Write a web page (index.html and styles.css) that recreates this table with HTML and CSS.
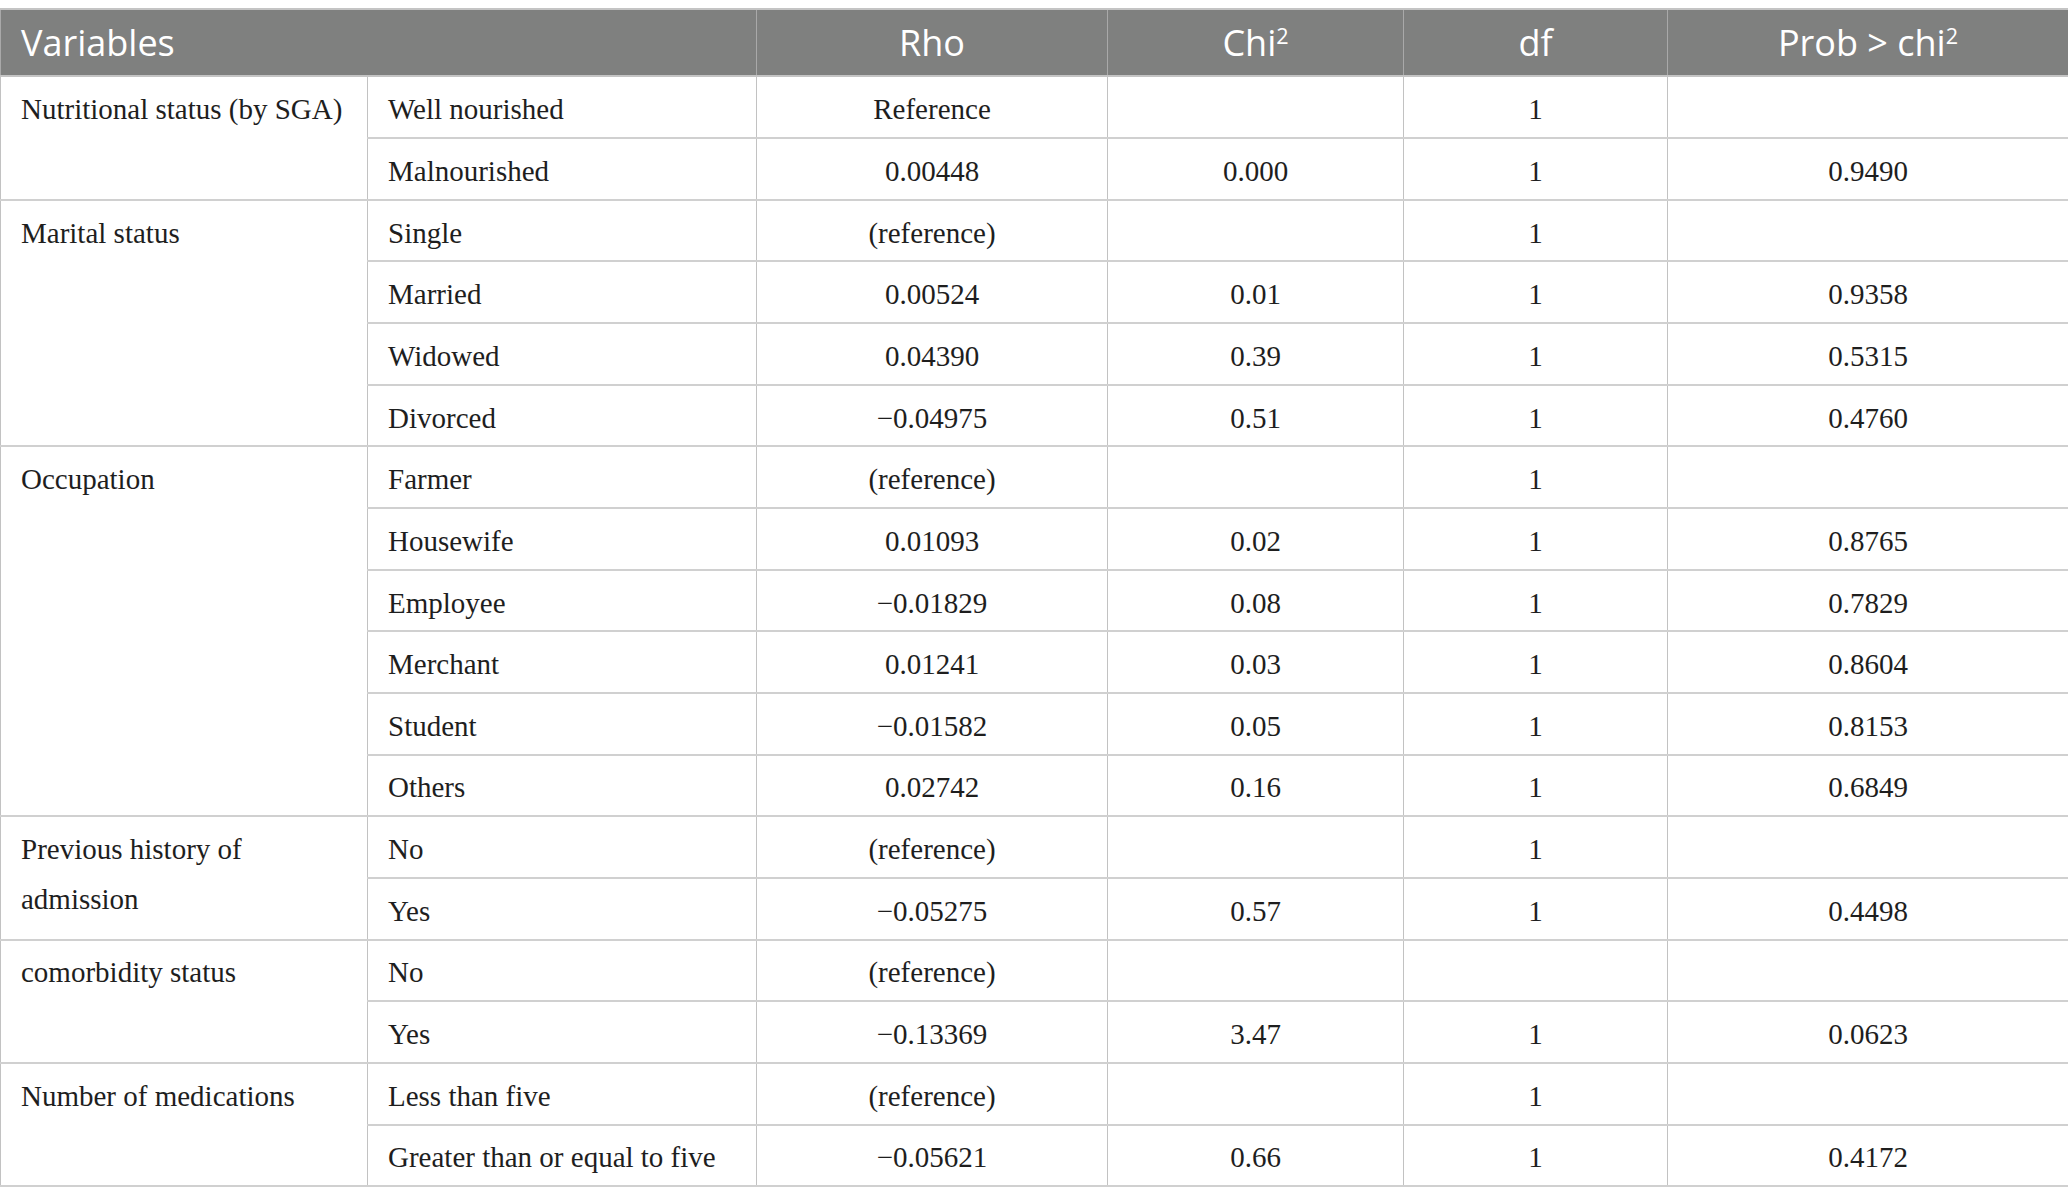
FILE: index.html
```html
<!DOCTYPE html>
<html lang="en">
<head>
<meta charset="utf-8">
<title>Table</title>
<link rel="stylesheet" href="styles.css">
</head>
<body>
<table class="stats">
  <colgroup>
    <col class="c1"><col class="c2"><col class="c3"><col class="c4"><col class="c5"><col class="c6">
  </colgroup>
  <thead>
    <tr>
      <th colspan="2" class="left">Variables</th>
      <th>Rho</th>
      <th>Chi<sup>2</sup></th>
      <th>df</th>
      <th>Prob &gt; chi<sup>2</sup></th>
    </tr>
  </thead>
  <tbody>
    <tr><td rowspan="2" class="left">Nutritional status (by SGA)</td><td class="left">Well nourished</td><td>Reference</td><td></td><td>1</td><td></td></tr>
    <tr><td class="left">Malnourished</td><td>0.00448</td><td>0.000</td><td>1</td><td>0.9490</td></tr>

    <tr><td rowspan="4" class="left">Marital status</td><td class="left">Single</td><td>(reference)</td><td></td><td>1</td><td></td></tr>
    <tr><td class="left">Married</td><td>0.00524</td><td>0.01</td><td>1</td><td>0.9358</td></tr>
    <tr><td class="left">Widowed</td><td>0.04390</td><td>0.39</td><td>1</td><td>0.5315</td></tr>
    <tr><td class="left">Divorced</td><td>&minus;0.04975</td><td>0.51</td><td>1</td><td>0.4760</td></tr>

    <tr><td rowspan="6" class="left">Occupation</td><td class="left">Farmer</td><td>(reference)</td><td></td><td>1</td><td></td></tr>
    <tr><td class="left">Housewife</td><td>0.01093</td><td>0.02</td><td>1</td><td>0.8765</td></tr>
    <tr><td class="left">Employee</td><td>&minus;0.01829</td><td>0.08</td><td>1</td><td>0.7829</td></tr>
    <tr><td class="left">Merchant</td><td>0.01241</td><td>0.03</td><td>1</td><td>0.8604</td></tr>
    <tr><td class="left">Student</td><td>&minus;0.01582</td><td>0.05</td><td>1</td><td>0.8153</td></tr>
    <tr><td class="left">Others</td><td>0.02742</td><td>0.16</td><td>1</td><td>0.6849</td></tr>

    <tr><td rowspan="2" class="left">Previous history of admission</td><td class="left">No</td><td>(reference)</td><td></td><td>1</td><td></td></tr>
    <tr><td class="left">Yes</td><td>&minus;0.05275</td><td>0.57</td><td>1</td><td>0.4498</td></tr>

    <tr><td rowspan="2" class="left">comorbidity status</td><td class="left">No</td><td>(reference)</td><td></td><td></td><td></td></tr>
    <tr><td class="left">Yes</td><td>&minus;0.13369</td><td>3.47</td><td>1</td><td>0.0623</td></tr>

    <tr><td rowspan="2" class="left">Number of medications</td><td class="left">Less than five</td><td>(reference)</td><td></td><td>1</td><td></td></tr>
    <tr><td class="left">Greater than or equal to five</td><td>&minus;0.05621</td><td>0.66</td><td>1</td><td>0.4172</td></tr>
  </tbody>
</table>
</body>
</html>
```
FILE: styles.css
```css
html, body {
  background: #ffffff;
}
body {
  margin: 8px 0 0 0;
}
.stats {
  width: 2068px;
  border-collapse: collapse;
  table-layout: fixed;
  font-family: "Liberation Serif", "Times New Roman", serif;
  color: #1e1e1e;
}
.c1 { width: 367px; }
.c2 { width: 389px; }
.c3 { width: 351px; }
.c4 { width: 296px; }
.c5 { width: 264px; }
.c6 { width: 401px; }

.stats th {
  background: #7f807f;
  color: #ffffff;
  font-family: "Open Sans", "Noto Sans", sans-serif;
  font-weight: 400;
  font-size: 36px;
  line-height: 48px;
  padding: 8.7px 20px;
  text-align: center;
  vertical-align: middle;
  border: 1px solid #a9a9a9;
  border-top: 2px solid #c4c4c4;
  border-bottom: 2px solid #c4c4c4;
}
.stats th sup {
  font-size: 0.6em;
  line-height: 0;
  vertical-align: 0.55em;
}
.stats td {
  font-size: 29px;
  line-height: 50px;
  padding: 6.9px 20px 2.78px 20px;
  text-align: center;
  vertical-align: top;
  border-left: 1px solid #c2c2c2;
  border-right: 1px solid #c2c2c2;
  border-top: 2px solid #d0d0d0;
  border-bottom: 2px solid #d0d0d0;
}
.stats .left {
  text-align: left;
}
```
